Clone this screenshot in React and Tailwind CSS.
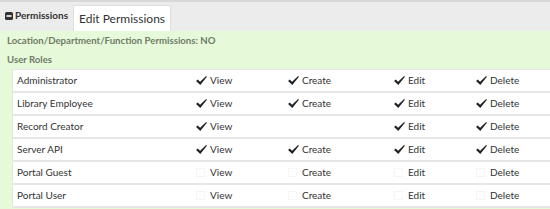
const roles = [
  { name: 'Administrator', perms: [true, true, true, true] },
  { name: 'Library Employee', perms: [true, true, true, true] },
  { name: 'Record Creator', perms: [true, false, true, true], hide: [false, true, false, false] },
  { name: 'Server API', perms: [true, true, true, true] },
  { name: 'Portal Guest', perms: [false, false, false, false] },
  { name: 'Portal User', perms: [false, false, false, false] },
];

const labels = ['View', 'Create', 'Edit', 'Delete'];

const Check = ({ on }) =>
  on ? (
    <span className="w-[13px] shrink-0 flex items-center">
      <svg width="11" height="9" viewBox="0 0 11.6 9.6">
        <path d="M0 5.2 L1.7 3.7 L4.3 6.2 L10.7 0 L11.6 0.9 L4.5 9.6 Z" fill="#222" />
      </svg>
    </span>
  ) : (
    <span className="w-[13px] shrink-0 flex items-center">
      <span className="w-[9px] h-[9px] border border-[#f6f6f6]" />
    </span>
  );

const App = () => {
  return (
    <div className="w-[550px] h-[209px] overflow-hidden bg-[#e6f9d9] font-['Lato',sans-serif] text-[#333]">
      <div className="h-[31px] bg-[#ececec] border-t-2 border-[#d8d8d8] flex items-end">
        <div className="h-full flex items-center pl-[5px] gap-[2px] pb-[2px]">
          <svg width="8" height="8" viewBox="0 0 8 8">
            <rect x="0" y="0" width="8" height="8" rx="1.5" fill="#333" />
            <rect x="1.5" y="3.2" width="5" height="1.6" fill="#fff" />
          </svg>
          <span className="text-[10px] font-bold">Permissions</span>
        </div>
        <button className="ml-[5px] h-[26px] w-[98px] bg-white border border-b-0 border-[#dedede] text-[12px] text-[#333] flex items-center justify-center">
          Edit Permissions
        </button>
      </div>

      <div className="pl-[7px] pt-[3px] text-[9.6px] font-bold text-[#707b68]">
        <div className="h-[14px] leading-[14px]">Location/Department/Function Permissions: NO</div>
        <div className="h-[14px] leading-[14px] mt-[5px]">User Roles</div>
      </div>

      <div className="ml-[12px] mt-[2px] bg-white border-l border-t border-[#e4e4e4]">
        {roles.map((role) => (
          <div
            key={role.name}
            className="grid grid-cols-[183px_92px_106px_82px_1fr] h-[23px] items-center border-b-2 border-[#e6e6e6] text-[10px]"
          >
            <div className="pl-[4px]">{role.name}</div>
            {labels.map((label, i) =>
              role.hide && role.hide[i] ? (
                <div key={label} />
              ) : (
                <div key={label} className="flex items-center">
                  <Check on={role.perms[i]} />
                  <span className="ml-[1px]">{label}</span>
                </div>
              )
            )}
          </div>
        ))}
      </div>
    </div>
  );
};

export default App;
